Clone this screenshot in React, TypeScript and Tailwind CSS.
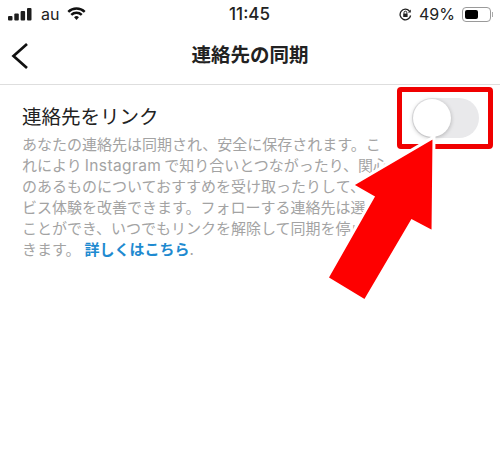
const lines = [
  "あなたの連絡先は同期され、安全に保存されます。こ",
  "instagram",
  "のあるものについておすすめを受け取ったりして、サー",
  "ビス体験を改善できます。フォローする連絡先は選ぶ",
  "ことができ、いつでもリンクを解除して同期を停止で",
];

function StatusBar() {
  return (
    <div className="flex h-[28px] items-center pl-[8px] pr-[7px] text-[16px] leading-none text-[#222]">
      <div className="flex w-[160px] items-center">
        <svg width="24" height="13" viewBox="0 0 24 13" fill="#1c1c1c">
          <rect x="0" y="8" width="4.5" height="4.5" rx="1" />
          <rect x="6.3" y="5.5" width="4.5" height="7" rx="1" />
          <rect x="12.6" y="3" width="4.5" height="9.5" rx="1" />
          <rect x="19" y="0" width="4.5" height="12.5" rx="1" />
        </svg>
        <span className="ml-[9px]">au</span>
        <svg className="ml-[8px]" width="19" height="14" viewBox="0 0 20 15" fill="none" stroke="#111" strokeWidth="2.6">
          <path d="M1.2 5.2a12.5 12.5 0 0 1 17.6 0" />
          <path d="M4.4 8.5a8 8 0 0 1 11.2 0" />
          <path d="M10 13.8 7.4 11a3.7 3.7 0 0 1 5.2 0z" fill="#111" stroke="none" />
        </svg>
      </div>
      <div className="flex-1 pr-[2px] text-center text-[17px] font-medium">11:45</div>
      <div className="flex w-[160px] items-center justify-end">
        <svg width="13" height="13" viewBox="0 0 13 13" fill="none" stroke="#222" strokeWidth="1.3">
          <path d="M11.6 7.5A5.3 5.3 0 1 1 10.4 3" />
          <path d="M11.8 1.5v3h-3z" fill="#222" stroke="none" />
          <rect x="4.2" y="5.6" width="4.4" height="3.4" fill="#222" stroke="none" />
          <path d="M5 5.8V4.6a1.4 1.4 0 0 1 2.8 0v1.2" strokeWidth="1" />
        </svg>
        <span className="ml-[7px]">49%</span>
        <div className="ml-[7px] flex h-[15px] w-[29px] items-center rounded-[4px] border border-[#9a9a9a] p-[2px]">
          <div className="h-full w-[13px] rounded-[2px] bg-black" />
        </div>
        <div className="ml-[1px] h-[5px] w-[1px] bg-[#aaa]" />
      </div>
    </div>
  );
}

export default function App() {
  return (
    <div
      className="relative h-[450px] w-[500px] overflow-hidden bg-white"
      style={{ fontFamily: '"Inter", "Noto Sans CJK JP", sans-serif' }}
    >
      <StatusBar />

      <div className="relative flex h-[57px] items-center justify-center border-b border-[#dedede] pb-[1px]">
        <svg className="absolute left-[10px] top-[13px]" width="22" height="30" viewBox="0 0 22 30" fill="none" stroke="#111" strokeWidth="2.7">
          <path d="M17 3 3.5 15 17 27" />
        </svg>
        <h1 className="text-[19.5px] font-bold text-[#222]">連絡先の同期</h1>
      </div>

      <div className="flex items-start justify-between pl-[22px] pr-[21px] pt-[13px]">
        <div className="pt-[6px] text-[19.5px] leading-[26px] text-[#222]">連絡先をリンク</div>
        <div className="flex h-[40px] w-[67px] items-center rounded-full bg-[#e9e9eb] pl-[1px]">
          <div className="h-[38px] w-[38px] rounded-full bg-white shadow-[0_1px_4px_rgba(0,0,0,0.25)]" />
        </div>
      </div>

      <div className="mt-[-3px] pl-[22px] text-[15px] leading-[20.9px] text-[#a3a3a3]">
        {lines.map((line) =>
          line === "instagram" ? (
            <div key={line} className="whitespace-nowrap">
              れにより
              <span className="mx-[3px] text-[15.5px] tracking-[0.4px]">Instagram</span>
              で知り合いとつながったり、関心
            </div>
          ) : (
            <div key={line} className="whitespace-nowrap">
              {line}
            </div>
          ),
        )}
        <div className="whitespace-nowrap">
          きます。
          <span className="ml-[4px] font-bold text-[#1e8ad0]">詳しくはこちら</span>.
        </div>
      </div>

      <div className="absolute left-[397px] top-[87px] h-[62px] w-[96px] rounded-[4px] border-[5px] border-[#f00000]" />

      <svg className="absolute left-0 top-0" width="500" height="450" viewBox="0 0 500 450">
        <polygon
          points="434,137 433,232 412,221 365,301 327,278 373,197 352,185"
          fill="#fe0000"
          stroke="#ffffff"
          strokeWidth="3"
          strokeLinejoin="miter"
        />
      </svg>
    </div>
  );
}
